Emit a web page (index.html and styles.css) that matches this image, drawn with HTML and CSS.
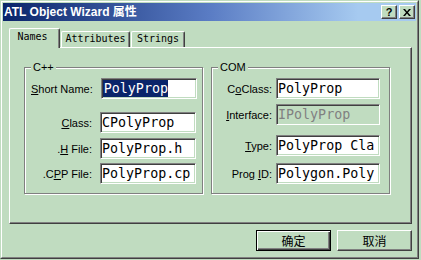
FILE: index.html
```html
<!DOCTYPE html>
<html lang="zh">
<head>
<meta charset="utf-8">
<title>ATL Object Wizard 属性</title>
<link rel="stylesheet" href="styles.css">
</head>
<body>
<div class="window">
  <div class="frame">
    <div class="titlebar">
      <span class="title">ATL Object Wizard 属性</span>
      <div class="caption-buttons">
        <span class="cbtn help">?</span>
        <span class="cbtn close"><svg width="8" height="7" viewBox="0 0 8 7"><path d="M0 0h2l2 2.5L6 0h2L5 3.5 8 7H6L4 4.5 2 7H0l3-3.5z" fill="#000"/></svg></span>
      </div>
    </div>
    <div class="content">
      <div class="tabs">
        <div class="tab active">Names</div>
        <div class="tab t-attr">Attributes</div>
        <div class="tab t-str">Strings</div>
      </div>
      <div class="panel">
        <fieldset class="group cpp">
          <legend>C++</legend>
          <div class="row">
            <label><u>S</u>hort Name:</label>
            <div class="field"><span class="sel">PolyProp</span></div>
          </div>
          <div class="row cpp-r2">
            <label><u>C</u>lass:</label>
            <div class="field">CPolyProp</div>
          </div>
          <div class="row cpp-r3">
            <label>.<u>H</u> File:</label>
            <div class="field">PolyProp.h</div>
          </div>
          <div class="row cpp-r4">
            <label>.C<u>P</u>P File:</label>
            <div class="field">PolyProp.cp</div>
          </div>
        </fieldset>
        <fieldset class="group com">
          <legend>COM</legend>
          <div class="row">
            <label>C<u>o</u>Class:</label>
            <div class="field">PolyProp</div>
          </div>
          <div class="row com-r2">
            <label><u>I</u>nterface:</label>
            <div class="field disabled">IPolyProp</div>
          </div>
          <div class="row com-r3">
            <label><u>T</u>ype:</label>
            <div class="field">PolyProp Cla</div>
          </div>
          <div class="row com-r4">
            <label>Prog <u>I</u>D:</label>
            <div class="field">Polygon.Poly</div>
          </div>
        </fieldset>
      </div>
      <div class="buttons">
        <button class="btn default">确定</button>
        <button class="btn">取消</button>
      </div>
    </div>
  </div>
</div>
</body>
</html>
```
FILE: styles.css
```css
* { box-sizing: border-box; }
html, body {
  margin: 0;
  padding: 0;
  background: #c0dcc0;
}
body {
  width: 421px;
  height: 260px;
  overflow: hidden;
  font-family: "Liberation Sans", Arial, "Noto Sans CJK SC", sans-serif;
  font-size: 11px;
  color: #000;
}
.window {
  width: 419px;
  height: 259px;
  border: 1px solid;
  border-color: #c0dcc0 #404040 #404040 #c0dcc0;
}
.frame {
  height: 100%;
  border: 1px solid;
  border-color: #fff #808080 #808080 #fff;
  padding: 1px;
  display: flex;
  flex-direction: column;
}
.titlebar {
  height: 18px;
  flex: none;
  background: linear-gradient(to right, #0a246a 0%, #5a7cc4 50%, #a6caf0 86%, #a6caf0 100%);
  display: flex;
  align-items: center;
  justify-content: space-between;
  padding: 0 1px 0 1px;
}
.title {
  color: #fff;
  font-weight: bold;
  font-size: 12px;
  line-height: 18px;
  white-space: nowrap;
}
.caption-buttons {
  display: flex;
  gap: 2px;
}
.cbtn {
  width: 16px;
  height: 14px;
  background: #c0dcc0;
  border: 1px solid;
  border-color: #fff #404040 #404040 #fff;
  box-shadow: inset -1px -1px #808080;
  display: flex;
  align-items: center;
  justify-content: center;
  font-weight: bold;
  font-size: 11px;
  line-height: 12px;
}
.content {
  flex: 1;
  display: flex;
  flex-direction: column;
  padding: 7px 4px 0 6px;
}
.tabs {
  display: flex;
  align-items: flex-end;
  height: 19px;
}
.tab {
  height: 16px;
  border: 1px solid;
  border-bottom: none;
  border-color: #fff #404040 #fff #fff;
  box-shadow: inset -1px 0 #808080;
  border-radius: 2px 2px 0 0;
  font-family: "DejaVu Sans Mono", "Liberation Mono", monospace;
  font-size: 10px;
  line-height: 12px;
  padding-top: 1px;
  text-align: center;
  background: #c0dcc0;
}
.tab.active {
  width: 51px;
  height: 20px;
  margin-bottom: -1px;
  position: relative;
  z-index: 1;
  padding-top: 2px;
  padding-right: 4px;
}
.t-attr { width: 69px; margin-left: 1px; }
.t-str { width: 54px; margin-left: 1px; }
.panel {
  height: 177px;
  width: 403px;
  border: 1px solid;
  border-color: #fff #404040 #404040 #fff;
  box-shadow: inset -1px -1px #808080;
  padding: 13px 0 0 14px;
  display: flex;
  align-items: flex-start;
  gap: 8px;
}
.group {
  margin: 0;
  width: 179px;
  min-width: 0;
  border: 1px solid #808080;
  box-shadow: 1px 1px 0 #fff, inset 1px 1px 0 #fff;
  padding: 4px 6px 9px 6px;
}
.group.com { padding-right: 9px; }
.group legend {
  padding: 0 2px;
  line-height: 13px;
  background: #c0dcc0;
}
.row {
  display: flex;
  align-items: center;
  height: 21px;
}
.row label {
  flex: 1;
  text-align: right;
  white-space: nowrap;
}
.cpp .field { width: 96px; margin-left: 8px; }
.com .field { width: 104px; margin-left: 4px; }
.cpp-r2 { margin-top: 13px; }
.cpp-r3 { margin-top: 5px; }
.cpp-r4 { margin-top: 4px; }
.com-r2 { margin-top: 5px; }
.com-r3 { margin-top: 10px; }
.com-r4 { margin-top: 7px; }
.field {
  height: 21px;
  flex: none;
  border: 1px solid;
  border-color: #808080 #fff #fff #808080;
  box-shadow: inset 1px 1px #404040, inset -1px -1px #c0dcc0;
  background: #fff;
  font-family: "DejaVu Sans Mono", "Liberation Mono", monospace;
  font-size: 13.33px;
  line-height: 17px;
  padding: 1px 0 1px 1px;
  overflow: hidden;
  white-space: nowrap;
}
.field.disabled {
  background: #c0dcc0;
  color: #808080;
}
.sel {
  display: inline-block;
  background: #0a246a;
  color: #fff;
  line-height: 17px;
  vertical-align: top;
  padding-left: 1px;
}
.buttons {
  display: flex;
  justify-content: flex-end;
  gap: 6px;
  margin-top: 6px;
}
.btn {
  width: 75px;
  height: 21px;
  padding: 0;
  margin: 0;
  background: #c0dcc0;
  border: 1px solid;
  border-color: #fff #404040 #404040 #fff;
  box-shadow: inset -1px -1px #808080;
  font-family: "Noto Sans CJK SC", sans-serif;
  font-size: 12px;
  line-height: 17px;
  color: #000;
}
.btn.default {
  border: 1px solid #000;
  box-shadow: inset 1px 1px #fff, inset -1px -1px #404040, inset -2px -2px #808080;
}
```
